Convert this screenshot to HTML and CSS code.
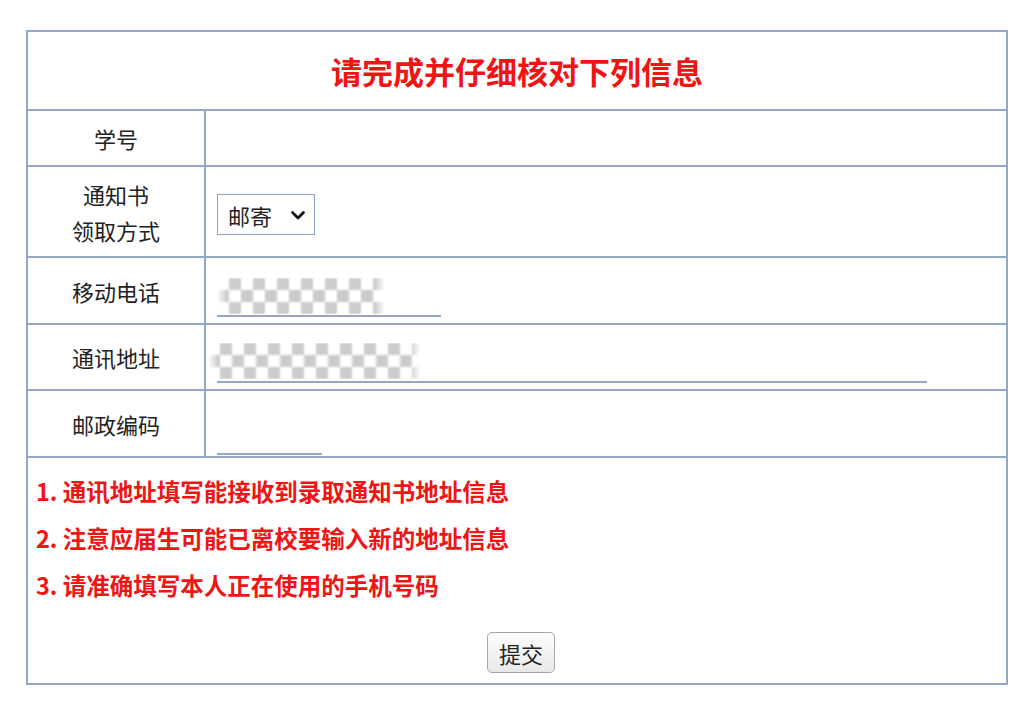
FILE: index.html
```html
<!DOCTYPE html>
<html lang="zh-CN">

<head>
  <meta charset="UTF-8">
  <meta name="viewport" content="width=device-width, initial-scale=1.0">
  <title>信息核对</title>
  <link rel="stylesheet" href="styles.css">
</head>

<body>
  <form class="info-form" onsubmit="return false">
    <table class="info">
      <colgroup>
        <col class="col-label">
        <col class="col-value">
      </colgroup>
      <tr class="row-title">
        <th colspan="2">请完成并仔细核对下列信息</th>
      </tr>
      <tr class="row-id">
        <td class="label">学号</td>
        <td class="value"></td>
      </tr>
      <tr class="row-notice">
        <td class="label">通知书<br>领取方式</td>
        <td class="value">
          <div class="select-wrap">
            <select id="method">
              <option>邮寄</option>
              <option>自取</option>
            </select>
            <svg class="chevron" width="16" height="12" viewBox="0 0 16 12">
              <path d="M2.5 3.5 L8 9 L13.5 3.5" fill="none" stroke="#111" stroke-width="2.8" stroke-linecap="round" stroke-linejoin="round" />
            </svg>
          </div>
        </td>
      </tr>
      <tr class="row-phone">
        <td class="label">移动电话</td>
        <td class="value">
          <div class="field">
            <input type="text" class="line-input phone" />
            <span class="masked mask-phone"></span>
          </div>
        </td>
      </tr>
      <tr class="row-address">
        <td class="label">通讯地址</td>
        <td class="value">
          <div class="field">
            <input type="text" class="line-input address" />
            <span class="masked mask-address"></span>
          </div>
        </td>
      </tr>
      <tr class="row-zip">
        <td class="label">邮政编码</td>
        <td class="value">
          <input type="text" class="line-input zip" />
        </td>
      </tr>
      <tr class="row-notes">
        <td colspan="2" class="notes">
          <p>1. 通讯地址填写能接收到录取通知书地址信息</p>
          <p>2. 注意应届生可能已离校要输入新的地址信息</p>
          <p>3. 请准确填写本人正在使用的手机号码</p>
          <div class="actions">
            <button type="submit">提交</button>
          </div>
        </td>
      </tr>
    </table>
  </form>
</body>

</html>
```

FILE: styles.css
```css
body {
  margin: 0;
  padding: 0;
  background: #ffffff;
  font-family: "Noto Sans CJK SC", "Noto Sans", sans-serif;
  color: #222;
}

.info-form {
  padding: 30px 0 0 26px;
}

.info {
  border-collapse: collapse;
  width: 982px;
  table-layout: fixed;
}

.col-label {
  width: 178px;
}

.info th,
.info td {
  border: 2px solid #93a7c6;
  padding: 0;
}

.row-title th {
  height: 77px;
  font-size: 31px;
  font-weight: 700;
  color: #f01414;
  text-align: center;
}

.label {
  text-align: center;
  font-size: 22px;
  line-height: 36px;
  color: #222;
}

.value {
  padding-left: 10px !important;
}

.row-id td {
  height: 54px;
}

.row-notice td {
  height: 89px;
}

.row-phone td,
.row-zip td {
  height: 65px;
}

.row-address td {
  height: 64px;
}

.select-wrap {
  position: relative;
  display: inline-block;
  margin-left: 1px;
  margin-top: 6px;
}

.select-wrap select {
  appearance: none;
  -webkit-appearance: none;
  width: 98px;
  height: 41px;
  padding: 0 0 0 10px;
  border: 1.5px solid #8ea3c4;
  border-radius: 0;
  background: #fff;
  font-family: inherit;
  font-size: 22px;
  color: #222;
}

.chevron {
  position: absolute;
  right: 9px;
  top: 15px;
  pointer-events: none;
}

.field {
  position: relative;
  display: inline-block;
}

.line-input {
  display: block;
  height: 42px;
  margin-top: 8px;
  padding: 0;
  border: none;
  border-bottom: 2px solid #93a7c6;
  outline: none;
  background: transparent;
  font-family: inherit;
  font-size: 22px;
}

.phone {
  width: 224px;
  margin-left: 1px;
}

.address {
  width: 710px;
  margin-left: 1px;
}

.zip {
  width: 105px;
  margin-left: 1px;
  margin-top: 18px;
}

.masked {
  position: absolute;
  background: repeating-conic-gradient(#cccccc 0 25%, #ffffff 0 50%) 0 0 / 24px 24px;
  filter: blur(0.8px);
  -webkit-mask-image: linear-gradient(90deg, transparent 0, #000 10px, #000 calc(100% - 10px), transparent 100%);
  mask-image: linear-gradient(90deg, transparent 0, #000 10px, #000 calc(100% - 10px), transparent 100%);
}

.mask-phone {
  left: 1px;
  top: 13px;
  width: 168px;
  height: 36px;
}

.mask-address {
  left: -8px;
  top: 12px;
  width: 212px;
  height: 36px;
}

.notes {
  vertical-align: top;
  padding: 10px 0 0 8px !important;
  height: 215px;
}

.notes p {
  margin: 0;
  font-size: 23.5px;
  font-weight: 700;
  line-height: 47px;
  color: #f01414;
}

.actions {
  text-align: center;
  margin-top: 23px;
}

.actions button {
  width: 68px;
  height: 41px;
  padding: 0;
  border: 1px solid #a6a6a6;
  border-radius: 5px;
  background: linear-gradient(#fdfdfd, #e9e9e9);
  font-family: inherit;
  font-size: 22px;
  color: #222;
  cursor: pointer;
}
```
